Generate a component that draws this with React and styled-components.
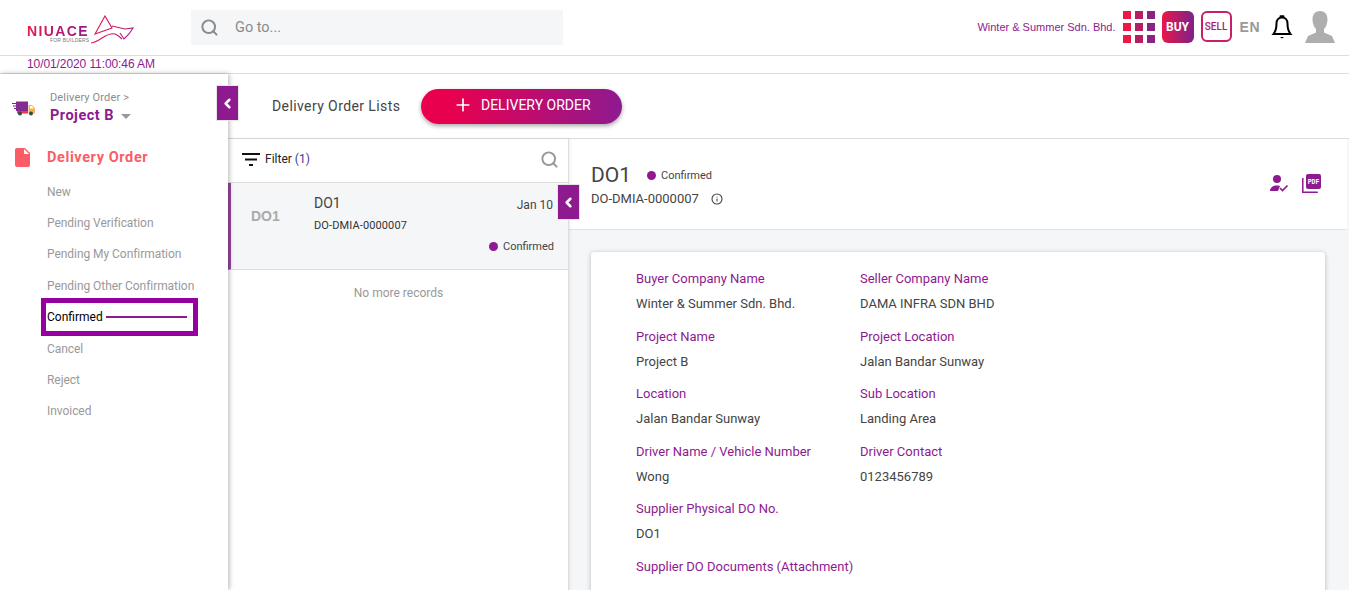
import React from 'react';
import styled, { createGlobalStyle } from 'styled-components';
import { Search, ChevronLeft, Plus, Info } from 'lucide-react';

const GlobalStyle = createGlobalStyle`
  html, body {
    margin: 0;
    height: 590px;
    overflow: hidden;
    background: #fff;
    font-family: Roboto, "Liberation Sans", sans-serif;
  }
  * { box-sizing: border-box; }
`;

const Page = styled.div`
  width: 1349px;
  height: 590px;
  overflow: hidden;
  display: flex;
  flex-direction: column;
`;

const Header = styled.header`
  height: 56px;
  flex: none;
  display: flex;
  align-items: center;
  padding: 0 14px 2px 26px;
  border-bottom: 1px solid #ddd;
`;

const Logo = styled.div`
  width: 165px;
  flex: none;
  position: relative;
  height: 40px;
`;

const LogoWord = styled.div`
  position: absolute;
  left: 1px;
  top: 18px;
  font: 700 14px/12px "Liberation Sans", sans-serif;
  letter-spacing: 1.4px;
  background: linear-gradient(90deg, #e8174a, #8e1a90);
  -webkit-background-clip: text;
  background-clip: text;
  color: transparent;
`;

const LogoSub = styled.div`
  position: absolute;
  left: 24px;
  top: 30px;
  font: 400 5px/6px "Liberation Sans", sans-serif;
  letter-spacing: 0.2px;
  color: #777;
`;

const LogoMark = styled.svg`
  position: absolute;
  left: 64px;
  top: 8px;
`;

const GoTo = styled.div`
  width: 372px;
  height: 35px;
  margin-top: 2px;
  background: #f5f6f8;
  display: flex;
  align-items: center;
  gap: 16px;
  padding-left: 9px;
  color: #8a8a8a;
  font-size: 14.5px;
`;

const HeaderRight = styled.div`
  margin-left: auto;
  display: flex;
  align-items: center;
`;

const CompanyName = styled.span`
  font: 11px "Liberation Sans", sans-serif;
  color: #8e1a90;
  margin-right: 7px;
`;

const Dots = styled.div`
  display: grid;
  grid-template-columns: repeat(3, 8px);
  grid-auto-rows: 8px;
  gap: 4px;
  margin-right: 7px;
`;

const Dot = styled.i`
  display: block;
  background: ${(p) => p.$c};
`;

const BuyBadge = styled.div`
  width: 32px;
  height: 32px;
  border-radius: 6px;
  background: linear-gradient(90deg, #e8174a, #7e2188);
  color: #fff;
  font: 700 12px/32px Roboto, sans-serif;
  text-align: center;
  margin-right: 7px;
`;

const SellBadge = styled.div`
  width: 31px;
  height: 31px;
  border-radius: 6px;
  border: 2px solid #c81f66;
  color: #b01a78;
  font: 500 10px/27px Roboto, sans-serif;
  text-align: center;
  margin-right: 8px;
`;

const Lang = styled.span`
  font: 700 14px "Liberation Sans", sans-serif;
  color: #999;
  letter-spacing: 0.5px;
  margin-right: 11px;
`;

const Avatar = styled.svg`
  margin-left: 12px;
`;

const DateRow = styled.div`
  height: 18px;
  flex: none;
  padding-left: 27px;
  border-bottom: 1px solid #ddd;
  font: 12px/17px "Liberation Sans", sans-serif;
  letter-spacing: -0.09px;
  color: #8e1a90;
`;

const Body = styled.div`
  flex: 1;
  display: flex;
  min-height: 0;
`;

const Sidebar = styled.aside`
  width: 228px;
  flex: none;
  position: relative;
  z-index: 2;
  box-shadow: 1px 0 5px rgba(0, 0, 0, 0.3);
  background: #fff;
`;

const CollapseButton = styled.div`
  position: absolute;
  width: 23px;
  height: 36px;
  background: #8e1a90;
  border: 1px solid #e6e6e6;
  color: #fff;
  display: flex;
  align-items: center;
  justify-content: center;
  z-index: 3;
  left: ${(p) => p.$left}px;
  top: ${(p) => p.$top}px;
`;

const Crumb = styled.div`
  display: flex;
  align-items: center;
  gap: 14px;
  padding: 5px 0 0 12px;
  height: 64px;
`;

const CrumbLabel = styled.div`
  font-size: 11px;
  line-height: 13px;
  letter-spacing: 0.15px;
  color: #8b8b8b;
`;

const ProjectName = styled.div`
  font-size: 14.5px;
  line-height: 20px;
  font-weight: 700;
  color: #8e1a90;
  letter-spacing: 0.5px;
  display: flex;
  align-items: center;
  gap: 7px;
  margin-top: 2px;
`;

const Caret = styled.i`
  width: 0;
  height: 0;
  border: 5px solid transparent;
  border-top: 5px solid #999;
  border-bottom: 0;
`;

const SectionTitle = styled.div`
  display: flex;
  align-items: center;
  gap: 17px;
  padding: 8px 0 0 15px;
  height: 30px;
  font-size: 14.5px;
  font-weight: 700;
  letter-spacing: 0.6px;
  color: #fc5c65;
`;

const Menu = styled.ul`
  list-style: none;
  margin: 9px 0 0;
  padding: 0;
`;

const MenuItem = styled.li`
  height: 31.2px;
  line-height: 31px;
  padding-left: 47px;
  font-size: 12px;
  letter-spacing: -0.05px;
  color: #999;
`;

const ActiveItem = styled.li`
  width: 157px;
  height: 38px;
  margin: -4px 0 -2px 41px;
  border: 5px solid #9700a0;
  padding-left: 1px;
  display: flex;
  align-items: center;
  gap: 3px;
  font-size: 12px;
  color: #000;
  position: relative;
  z-index: 1;
`;

const ActiveLine = styled.i`
  width: 81px;
  height: 2px;
  background: #8e1a90;
`;

const Main = styled.main`
  flex: 1;
  display: flex;
  flex-direction: column;
  min-width: 0;
  position: relative;
`;

const TopBar = styled.div`
  height: 65px;
  flex: none;
  border-bottom: 1px solid #ddd;
  display: flex;
  align-items: center;
  padding-left: 44px;
  gap: 21px;
`;

const ListTitle = styled.span`
  font-size: 14px;
  letter-spacing: 0.4px;
  color: #444;
`;

const AddButton = styled.button`
  width: 201px;
  height: 35px;
  border: 0;
  border-radius: 18px;
  padding: 0 0 2px;
  background: linear-gradient(90deg, #e8004f 15%, #8e1a90 100%);
  box-shadow: 0 2px 4px rgba(0, 0, 0, 0.35);
  color: #fff;
  font: 400 14px Roboto, sans-serif;
  display: flex;
  align-items: center;
  justify-content: center;
  gap: 8px;
  letter-spacing: 0;
`;

const Columns = styled.div`
  flex: 1;
  display: flex;
  min-height: 0;
`;

const ListPanel = styled.section`
  width: 341px;
  flex: none;
  border-right: 1px solid #ddd;
  box-shadow: 1px 0 3px rgba(0, 0, 0, 0.08);
  position: relative;
  z-index: 1;
  background: #fff;
`;

const FilterRow = styled.div`
  height: 44px;
  display: flex;
  align-items: center;
  padding: 0 9px 3px 14px;
  gap: 5px;
  border-bottom: 1px solid #ddd;
  font-size: 12px;
  color: #222;
`;

const FilterCount = styled.span`
  color: #3a3a9a;
`;

const SearchIcon = styled(Search)`
  margin-left: auto;
  color: #999;
`;

const OrderRow = styled.div`
  height: 87px;
  background: #f5f6f8;
  border-left: 3px solid #97479e;
  border-bottom: 1px solid #ddd;
  display: grid;
  grid-template-columns: 83px 1fr auto;
  padding: 12px 15px 0 0;
  position: relative;
`;

const OrderBadge = styled.div`
  font: 700 14px/42px "Liberation Sans", sans-serif;
  color: #aaa;
  padding-left: 20px;
`;

const OrderName = styled.div`
  font-size: 14px;
  line-height: 17px;
  color: #444;
`;

const OrderCode = styled.div`
  font-size: 11px;
  line-height: 13px;
  letter-spacing: 0.12px;
  margin-top: 7px;
  color: #333;
`;

const OrderDate = styled.div`
  font-size: 12px;
  line-height: 20px;
  color: #444;
`;

const Status = styled.div`
  display: flex;
  align-items: center;
  gap: 5px;
  font-size: 11px;
  color: #444;
`;

const OrderStatus = styled(Status)`
  position: absolute;
  right: 14px;
  top: 57px;
`;

const StatusDot = styled.i`
  width: 9px;
  height: 9px;
  border-radius: 50%;
  background: #8e1a90;
`;

const NoRecords = styled.div`
  text-align: center;
  font-size: 12px;
  color: #999;
  padding: 16px 0 0 1px;
`;

const Detail = styled.section`
  flex: 1;
  min-width: 0;
  background: #f5f6f8;
  display: flex;
  flex-direction: column;
`;

const DetailHead = styled.div`
  height: 91px;
  flex: none;
  background: #fff;
  border-bottom: 1px solid #e2e2e2;
  display: flex;
  justify-content: space-between;
  padding: 24px 26px 0 22px;
  margin-right: 2px;
`;

const DetailTitle = styled.div`
  display: flex;
  align-items: center;
  gap: 16px;
  font-size: 21px;
  line-height: 25px;
  color: #444;
`;

const DetailCode = styled.div`
  display: flex;
  align-items: center;
  gap: 12px;
  font-size: 13px;
  line-height: 17px;
  margin-top: 2px;
  color: #444;
`;

const DetailActions = styled.div`
  display: flex;
  gap: 13px;
  padding-top: 11px;
`;

const Card = styled.div`
  margin: 22px 24px 0 22px;
  flex: 1;
  background: #fff;
  border-radius: 4px;
  box-shadow: 0 1px 5px rgba(0, 0, 0, 0.25);
  padding: 19px 0 0 45px;
  display: grid;
  grid-template-columns: 224px 224px;
  grid-auto-rows: 57.5px;
  align-content: start;
`;

const Field = styled.div`
  font-size: 13px;
  line-height: 16px;
  white-space: nowrap;
`;

const FieldLabel = styled.div`
  color: #8e1a90;
`;

const FieldValue = styled.div`
  color: #444;
  margin-top: 9px;
`;

const menuTop = ['New', 'Pending Verification', 'Pending My Confirmation', 'Pending Other Confirmation'];
const menuBottom = ['Cancel', 'Reject', 'Invoiced'];

const fields = [
  ['Buyer Company Name', 'Winter & Summer Sdn. Bhd.'],
  ['Seller Company Name', 'DAMA INFRA SDN BHD'],
  ['Project Name', 'Project B'],
  ['Project Location', 'Jalan Bandar Sunway'],
  ['Location', 'Jalan Bandar Sunway'],
  ['Sub Location', 'Landing Area'],
  ['Driver Name / Vehicle Number', 'Wong'],
  ['Driver Contact', '0123456789'],
  ['Supplier Physical DO No.', 'DO1'],
  ['', ''],
  ['Supplier DO Documents (Attachment)', ''],
];

const dotColors = ['#ec1846', '#b81f63', '#8a2386'];

const TruckIcon = () => (
  <svg width="24" height="15" viewBox="0 0 24 15">
    <path d="M0 2.5h5M1 5h4M2 7.5h3" stroke="#8e1a90" strokeWidth="1" />
    <rect x="4" y="0.5" width="12" height="9.5" fill="#852a8e" />
    <rect x="5" y="10" width="11" height="2.5" fill="#ee3b3f" />
    <path d="M16.5 4h3.5l3 3.5v5h-6.5z" fill="#f5b14a" />
    <path d="M18 5h2l1.6 2.5H18z" fill="#fff" />
    <circle cx="8" cy="12.5" r="2" fill="#37474f" />
    <circle cx="19" cy="12.5" r="2" fill="#37474f" />
  </svg>
);

const FileIcon = () => (
  <svg width="15" height="19" viewBox="0 0 15 19">
    <path d="M2 0h8l5 5v12a2 2 0 0 1-2 2H2a2 2 0 0 1-2-2V2a2 2 0 0 1 2-2z" fill="#fc5c65" />
    <path d="M9 1v5h5z" fill="#fff" />
  </svg>
);

const FilterIcon = () => (
  <svg width="18" height="13" viewBox="0 0 18 13">
    <path d="M0 1h18M3 6.5h12M7 12h4" stroke="#111" strokeWidth="2" fill="none" />
  </svg>
);

const BellIcon = () => (
  <svg width="22" height="26" viewBox="0 0 22 26">
    <path d="M11 3.5c-3.4 0-5.5 2.6-5.5 6 0 5.5-1 8-3 10.5h17c-2-2.5-3-5-3-10.5 0-3.4-2.1-6-5.5-6z" fill="none" stroke="#000" strokeWidth="2" />
    <path d="M9.5 2.2h3" stroke="#000" strokeWidth="2" strokeLinecap="round" />
    <path d="M9 23h4l-2 1.6z" fill="#000" />
  </svg>
);

const AvatarIcon = () => (
  <Avatar width="30" height="32" viewBox="0 0 30 32">
    <path d="M15 0c4.6 0 7.5 3.4 7.5 8.5 0 4.5-2 8-3.5 9.500v3.500l8 3.500 3 7H0l3-7 8-3.500V18c-1.500-1.500-3.500-5-3.500-9.500C7.500 3.400 10.400 0 15 0z" fill="#aeaeae" />
  </Avatar>
);

const UserCheckIcon = () => (
  <svg width="20" height="18" viewBox="0 0 20 18">
    <circle cx="8" cy="5" r="4" fill="#8e1a90" />
    <path d="M1 17c0-3.500 3-5.500 7-5.500 1 0 2 .1 3 .4L9 17z" fill="#8e1a90" />
    <path d="M11 14l2.500 2.500 5-5" fill="none" stroke="#8e1a90" strokeWidth="1.600" />
  </svg>
);

const PdfIcon = () => (
  <svg width="19" height="19" viewBox="0 0 19 19">
    <path d="M0.800 4v14.200h15" fill="none" stroke="#8e1a90" strokeWidth="1.500" />
    <rect x="4" y="0" width="15" height="15" rx="2" fill="#8e1a90" />
    <text x="11.500" y="10" fontSize="6.500" fontWeight="700" fill="#fff" textAnchor="middle" fontFamily="Liberation Mono, monospace">PDF</text>
  </svg>
);

const App = () => (
  <Page>
    <GlobalStyle />
    <Header>
      <Logo>
        <LogoWord>NIUACE</LogoWord>
        <LogoSub>FOR BUILDERS</LogoSub>
        <LogoMark width="46" height="30" viewBox="0 0 46 30">
          <defs>
            <linearGradient id="logoGrad" x1="0" x2="1">
              <stop offset="0" stopColor="#e8174a" />
              <stop offset="1" stopColor="#a81a80" />
            </linearGradient>
          </defs>
          <path
            d="M5 19L15 1l7 12zM22 11l13 3 8-1-4 6-5 5-4-6M1 28c9-1 15-11 24-9 3 1 5 3 7 5"
            fill="none"
            stroke="url(#logoGrad)"
            strokeWidth="1.100"
          />
        </LogoMark>
      </Logo>
      <GoTo>
        <Search size={19} strokeWidth={2.500} />
        Go to...
      </GoTo>
      <HeaderRight>
        <CompanyName>Winter &amp; Summer Sdn. Bhd.</CompanyName>
        <Dots>
          {Array.from({ length: 9 }, (_, i) => (
            <Dot key={i} $c={dotColors[i % 3]} />
          ))}
        </Dots>
        <BuyBadge>BUY</BuyBadge>
        <SellBadge>SELL</SellBadge>
        <Lang>EN</Lang>
        <BellIcon />
        <AvatarIcon />
      </HeaderRight>
    </Header>
    <DateRow>10/01/2020 11:00:46 AM</DateRow>
    <Body>
      <Sidebar>
        <Crumb>
          <TruckIcon />
          <div>
            <CrumbLabel>Delivery Order &gt;</CrumbLabel>
            <ProjectName>
              Project B <Caret />
            </ProjectName>
          </div>
        </Crumb>
        <SectionTitle>
          <FileIcon />
          Delivery Order
        </SectionTitle>
        <Menu>
          {menuTop.map((item) => (
            <MenuItem key={item}>{item}</MenuItem>
          ))}
          <ActiveItem>
            Confirmed <ActiveLine />
          </ActiveItem>
          {menuBottom.map((item) => (
            <MenuItem key={item}>{item}</MenuItem>
          ))}
        </Menu>
        <CollapseButton $left={216} $top={11}>
          <ChevronLeft size={15} strokeWidth={4} />
        </CollapseButton>
      </Sidebar>
      <Main>
        <TopBar>
          <ListTitle>Delivery Order Lists</ListTitle>
          <AddButton>
            <Plus size={20} strokeWidth={2} />
            DELIVERY ORDER
          </AddButton>
        </TopBar>
        <Columns>
          <ListPanel>
            <FilterRow>
              <FilterIcon />
              <span>
                Filter <FilterCount>(1)</FilterCount>
              </span>
              <SearchIcon size={19} strokeWidth={2.500} />
            </FilterRow>
            <OrderRow>
              <OrderBadge>DO1</OrderBadge>
              <div>
                <OrderName>DO1</OrderName>
                <OrderCode>DO-DMIA-0000007</OrderCode>
              </div>
              <OrderDate>Jan 10</OrderDate>
              <OrderStatus>
                <StatusDot /> Confirmed
              </OrderStatus>
            </OrderRow>
            <NoRecords>No more records</NoRecords>
            <CollapseButton $left={329} $top={45}>
              <ChevronLeft size={15} strokeWidth={4} />
            </CollapseButton>
          </ListPanel>
          <Detail>
            <DetailHead>
              <div>
                <DetailTitle>
                  DO1
                  <Status>
                    <StatusDot /> Confirmed
                  </Status>
                </DetailTitle>
                <DetailCode>
                  DO-DMIA-0000007
                  <Info size={12} strokeWidth={2.200} />
                </DetailCode>
              </div>
              <DetailActions>
                <UserCheckIcon />
                <PdfIcon />
              </DetailActions>
            </DetailHead>
            <Card>
              {fields.map(([label, value], i) => (
                <Field key={i}>
                  <FieldLabel>{label}</FieldLabel>
                  {value && <FieldValue>{value}</FieldValue>}
                </Field>
              ))}
            </Card>
          </Detail>
        </Columns>
      </Main>
    </Body>
  </Page>
);

export default App;
